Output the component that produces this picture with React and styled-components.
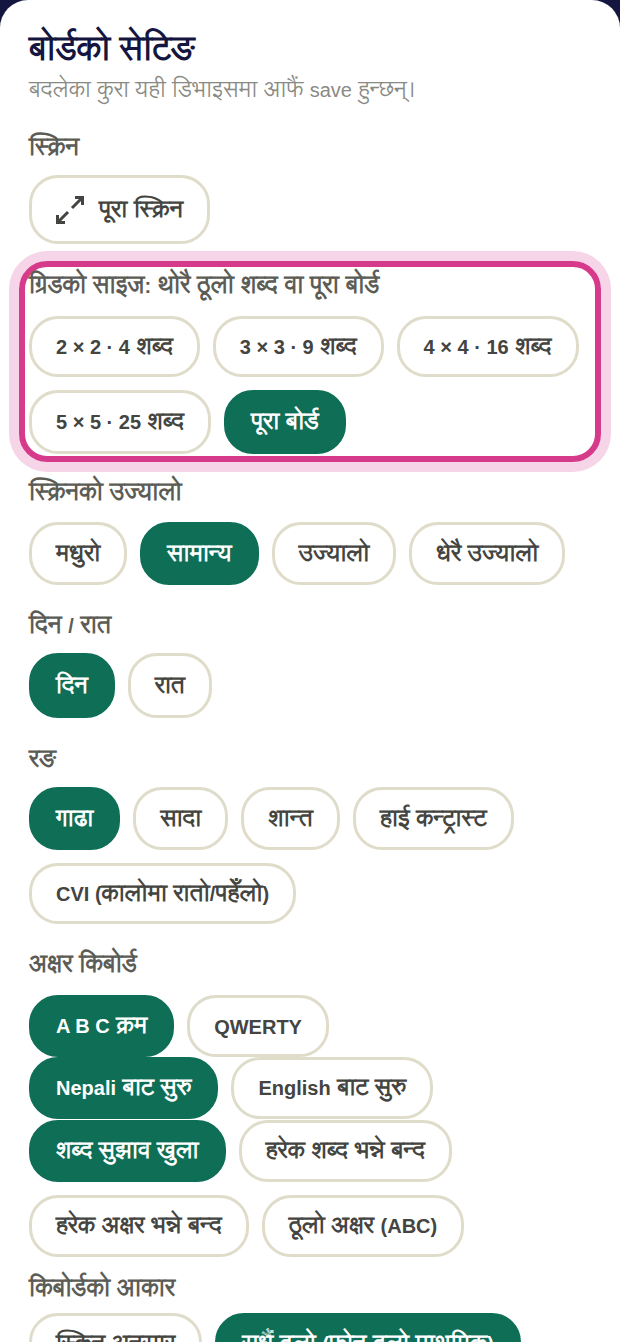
import React from 'react'
import styled, { createGlobalStyle } from 'styled-components'

const Global = createGlobalStyle`
  html, body {
    margin: 0;
    padding: 0;
    height: 100%;
    overflow: hidden;
    background: #14163f;
  }
  * { box-sizing: border-box; }
`

const Sheet = styled.div`
  width: 620px;
  height: 1342px;
  overflow: hidden;
  background: #fff;
  border-radius: 28px 28px 0 0;
  padding: 28px 19px 0 29px;
  font-family: "Liberation Sans", "Lohit Devanagari", sans-serif;
`

const Title = styled.h2`
  margin: 0;
  font-size: 34px;
  line-height: 40px;
  font-weight: 700;
  color: #14163f;
`

const Hint = styled.p`
  margin: 6px 0 0;
  font-size: 22.5px;
  line-height: 32px;
  color: #8a8a84;
`

const Latin = styled.span`
  font-size: 20px;
`

const Label = styled.div`
  margin-top: ${(p) => p.$top || 0}px;
  margin-bottom: ${(p) => p.$bottom || 14}px;
  font-size: 24px;
  line-height: 30px;
  font-weight: 700;
  white-space: nowrap;
  color: #5c5c56;
`

const Pills = styled.div`
  display: flex;
  flex-wrap: wrap;
  gap: 13px;
  margin-top: ${(p) => p.$top || 0}px;
`

const Pill = styled.button`
  display: inline-block;
  height: ${(p) => p.$h || 62}px;
  padding: 0 24px;
  border-radius: 29px;
  border: 3px solid ${(p) => (p.$on ? '#0f6e56' : '#dfdcc9')};
  background: ${(p) => (p.$on ? '#0f6e56' : '#fff')};
  color: ${(p) => (p.$on ? '#fff' : '#444441')};
  font-family: inherit;
  font-size: 23.5px;
  font-weight: 700;
  white-space: nowrap;
`

const Highlight = styled.div`
  width: 582px;
  height: 201px;
  margin: 17px 0 0 -10px;
  padding: 3px 0 0 4px;
  border: 6px solid #d63a8a;
  border-radius: 28px;
  box-shadow: 0 0 0 10px #f7d5e8;
`

const ExpandSvg = styled.svg`
  vertical-align: middle;
  margin-right: 15px;
`

const ExpandIcon = () => (
  <ExpandSvg width="28" height="28" viewBox="0 0 28 28" fill="none" stroke="#444441" strokeWidth="3">
    <path d="M16 12L27 1M19 1.5h7.5V9M12 16L1 27M1.5 19v7.5H9" />
  </ExpandSvg>
)

export default function App() {
  return (
    <>
      <Global />
      <Sheet>
        <Title>बोर्डको सेटिङ</Title>
        <Hint>
          बदलेका कुरा यही डिभाइसमा आफैं <Latin>save</Latin> हुन्छन्।
        </Hint>

        <Label $top={26} $bottom={13}>स्क्रिन</Label>
        <Pills>
          <Pill $h={69}>
            <ExpandIcon />
            पूरा स्क्रिन
          </Pill>
        </Pills>

        <Highlight>
          <Label $bottom={15}>ग्रिडको साइज<Latin>:</Latin> थोरै ठूलो शब्द वा पूरा बोर्ड</Label>
          <Pills>
            <Pill $h={61}><Latin>2 × 2 · 4</Latin> शब्द</Pill>
            <Pill $h={61}><Latin>3 × 3 · 9</Latin> शब्द</Pill>
            <Pill $h={61}><Latin>4 × 4 · 16</Latin> शब्द</Pill>
            <Pill $h={64}><Latin>5 × 5 · 25</Latin> शब्द</Pill>
            <Pill $h={64} $on>पूरा बोर्ड</Pill>
          </Pills>
        </Highlight>

        <Label $top={15} $bottom={15}>स्क्रिनको उज्यालो</Label>
        <Pills>
          <Pill $h={63}>मधुरो</Pill>
          <Pill $h={63} $on>सामान्य</Pill>
          <Pill $h={63}>उज्यालो</Pill>
          <Pill $h={63}>धेरै उज्यालो</Pill>
        </Pills>

        <Label $top={25} $bottom={12}>दिन <Latin>/</Latin> रात</Label>
        <Pills>
          <Pill $h={65} $on>दिन</Pill>
          <Pill $h={65}>रात</Pill>
        </Pills>

        <Label $top={26} $bottom={13}>रङ</Label>
        <Pills>
          <Pill $h={63} $on>गाढा</Pill>
          <Pill $h={63}>सादा</Pill>
          <Pill $h={63}>शान्त</Pill>
          <Pill $h={63}>हाई कन्ट्रास्ट</Pill>
          <Pill $h={61}><Latin>CVI (</Latin>कालोमा रातो<Latin>/</Latin>पहेँलो<Latin>)</Latin></Pill>
        </Pills>

        <Label $top={25} $bottom={16}>अक्षर किबोर्ड</Label>
        <Pills>
          <Pill $on><Latin>A B C</Latin> क्रम</Pill>
          <Pill><Latin>QWERTY</Latin></Pill>
        </Pills>
        <Pills>
          <Pill $on><Latin>Nepali</Latin> बाट सुरु</Pill>
          <Pill><Latin>English</Latin> बाट सुरु</Pill>
        </Pills>
        <Pills $top={1}>
          <Pill $on>शब्द सुझाव खुला</Pill>
          <Pill>हरेक शब्द भन्ने बन्द</Pill>
          <Pill>हरेक अक्षर भन्ने बन्द</Pill>
          <Pill>ठूलो अक्षर <Latin>(ABC)</Latin></Pill>
        </Pills>

        <Label $top={16} $bottom={10}>किबोर्डको आकार</Label>
        <Pills>
          <Pill>स्क्रिन अनुसार</Pill>
          <Pill $on>सधैं ठूलो <Latin>(</Latin>फोन ठूलो प्राथमिक<Latin>)</Latin></Pill>
        </Pills>
      </Sheet>
    </>
  )
}
